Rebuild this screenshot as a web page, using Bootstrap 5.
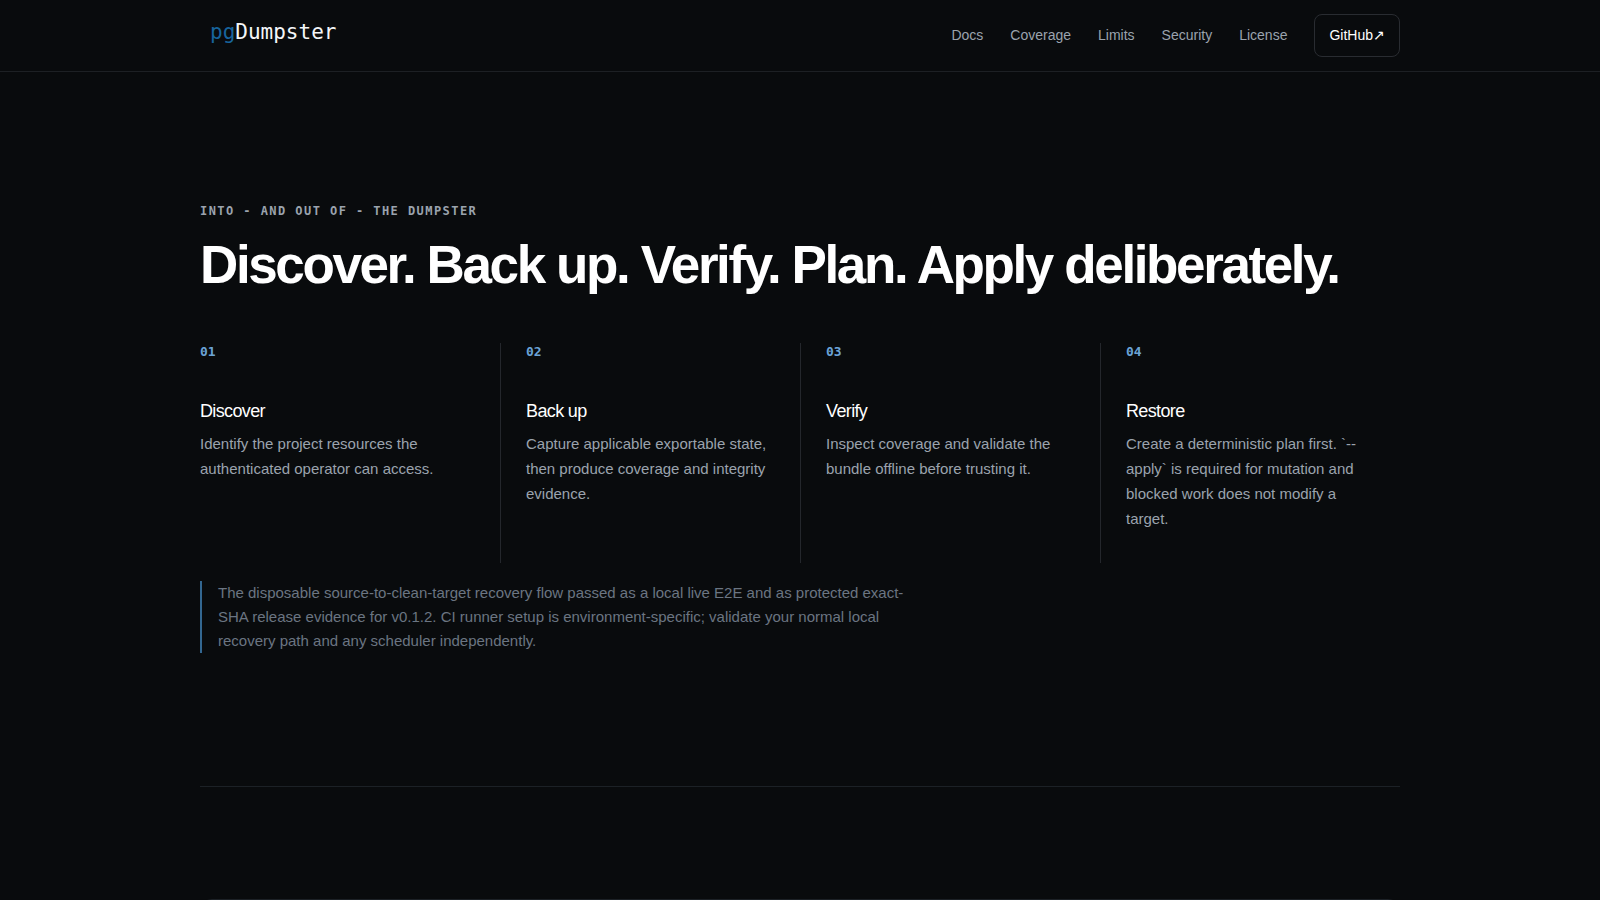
<!DOCTYPE html>
<html lang="en">
<head>
<meta charset="utf-8">
<meta name="viewport" content="width=device-width, initial-scale=1">
<title>pgDumpster</title>
<link href="https://cdn.jsdelivr.net/npm/bootstrap@5.3.0/dist/css/bootstrap.min.css" rel="stylesheet">
<style>
  body { background: #090b0d; color: #9ba3ad; font: 15px/25px "Liberation Sans", Arial, sans-serif; }
  .page-width { max-width: 1200px; }
  .site-header { border-bottom: 1px solid #1d2024; min-height: 72px; }
  .brand { font: 21px/28px "DejaVu Sans Mono", monospace; color: #f4f6f8; padding: 0 10px 8px; }
  .brand span { color: #17649c; }
  .site-nav { gap: 27px; font-size: 14px; }
  .site-nav a { color: #9ba3ad; text-decoration: none; }
  .site-nav .repo-link { color: #fff; border: 1px solid #292c31; border-radius: 8px; padding: 8px 14px; }
  .workflow { padding: 128px 0 133px; border-bottom: 1px solid #1c2126; }
  .eyebrow { font: bold 12px/22px "DejaVu Sans Mono", monospace; letter-spacing: .12em; text-transform: uppercase; margin-bottom: 14px; }
  h1 { font: bold 53px/58px "Liberation Sans", Arial, sans-serif; letter-spacing: -.045em; color: #fff; margin-bottom: 49px; }
  .step { min-height: 220px; padding: 0 25px; }
  .step:first-child { padding-left: 0; }
  .step + .step { border-left: 1px solid #24272c; }
  .step-number { font: bold 13px/18px "DejaVu Sans Mono", monospace; color: #6ba3d6; margin-bottom: 38px; }
  .step h2 { font: 18px/24px "Liberation Sans", Arial, sans-serif; letter-spacing: -.035em; color: #fff; margin-bottom: 8px; }
  .evidence { max-width: 720px; line-height: 24px; border-left: 2px solid #336791; padding-left: 16px; margin-top: 18px; color: #6b7582; }
  .next-panel { margin-top: 112px; min-height: 320px; border: 1px solid #1c2126; border-radius: 12px; }
</style>
</head>
<body>
<header class="site-header d-flex">
  <div class="container-fluid page-width px-0 d-flex align-items-center justify-content-between">
    <a class="brand text-decoration-none" href="#"><span>pg</span>Dumpster</a>
    <nav class="site-nav d-flex align-items-center" aria-label="Main">
      <a href="#docs">Docs</a>
      <a href="#coverage">Coverage</a>
      <a href="#limits">Limits</a>
      <a href="#security">Security</a>
      <a href="#license">License</a>
      <a class="repo-link d-flex" href="#github">GitHub<span aria-hidden="true">↗</span></a>
    </nav>
  </div>
</header>
<main class="container-fluid page-width px-0">
  <section class="workflow">
    <p class="eyebrow">Into - and out of - the dumpster</p>
    <h1>Discover. Back up. Verify. Plan. Apply deliberately.</h1>
    <div class="row g-0">
      <article class="step col-12 col-md-3">
        <p class="step-number">01</p>
        <h2>Discover</h2>
        <p class="mb-0">Identify the project resources the authenticated operator can access.</p>
      </article>
      <article class="step col-12 col-md-3">
        <p class="step-number">02</p>
        <h2>Back up</h2>
        <p class="mb-0">Capture applicable exportable state, then produce coverage and integrity evidence.</p>
      </article>
      <article class="step col-12 col-md-3">
        <p class="step-number">03</p>
        <h2>Verify</h2>
        <p class="mb-0">Inspect coverage and validate the bundle offline before trusting it.</p>
      </article>
      <article class="step col-12 col-md-3">
        <p class="step-number">04</p>
        <h2>Restore</h2>
        <p class="mb-0">Create a deterministic plan first. `--apply` is required for mutation and blocked work does not modify a target.</p>
      </article>
    </div>
    <p class="evidence mb-0">The disposable source-to-clean-target recovery flow passed as a local live E2E and as protected exact-SHA release evidence for v0.1.2. CI runner setup is environment-specific; validate your normal local recovery path and any scheduler independently.</p>
  </section>
  <section class="next-panel" aria-label="Coverage"></section>
</main>
<script src="https://cdn.jsdelivr.net/npm/bootstrap@5.3.0/dist/js/bootstrap.bundle.min.js"></script>
</body>
</html>
